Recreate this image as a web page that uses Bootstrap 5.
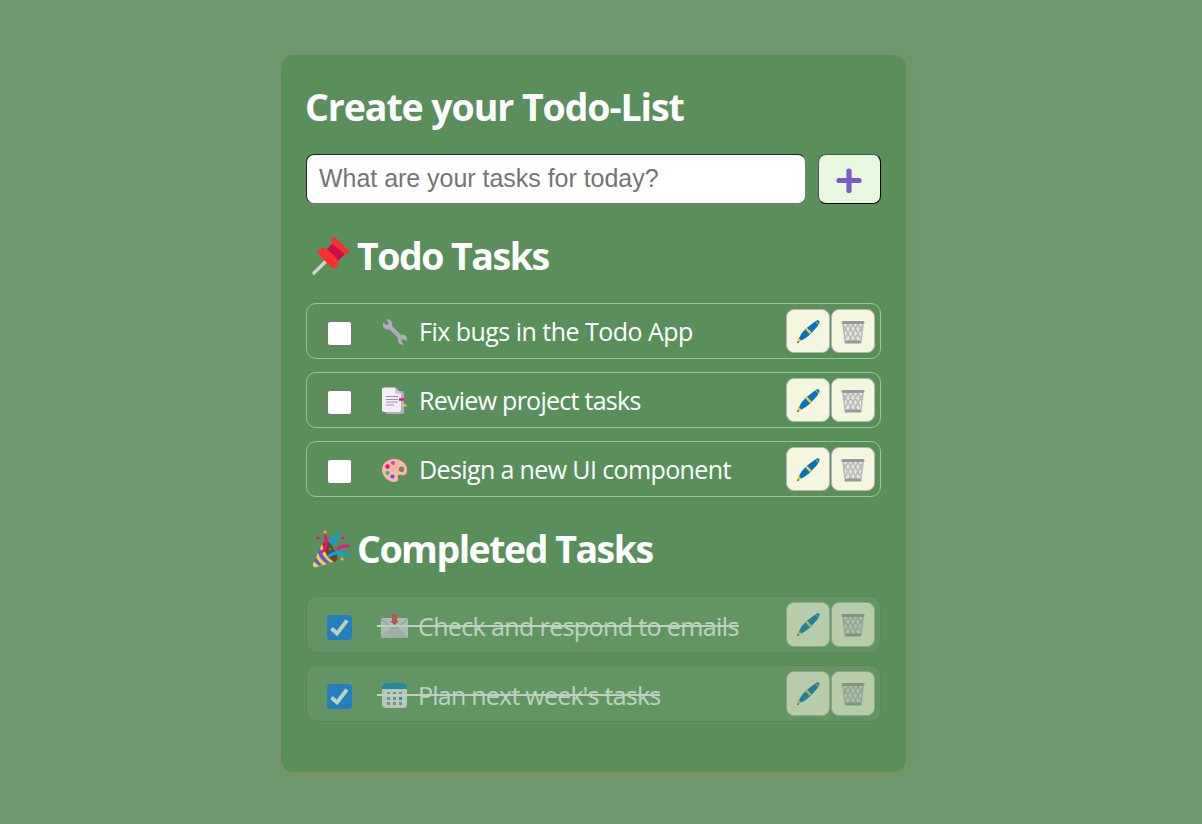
<!DOCTYPE html>
<html lang="en">
<head>
<meta charset="utf-8">
<meta name="viewport" content="width=device-width, initial-scale=1">
<title>Todo-List</title>
<link rel="stylesheet" href="https://cdn.jsdelivr.net/npm/bootstrap@5.3.0/dist/css/bootstrap.min.css">
<style>
body{background:#6e9770;font-family:"Segoe UI","Open Sans",sans-serif;color:#fff;height:824px;overflow:hidden}
.todo-panel{width:625px;height:717px;margin:55px 0 0 281px;padding:27px 25px 25px;border-radius:12.5px;background:#5a8f5c;box-shadow:0 3px 8px rgba(139,145,80,.65)}
.heading{font-size:37.5px;font-weight:700;line-height:50px;letter-spacing:-1.5px;margin:0;white-space:nowrap}
.main-title{letter-spacing:-1.08px;margin-left:-1px}
.heading svg{width:39px;height:40px;flex:none;margin-right:6px;margin-top:2px}
.entry-form{margin-top:22px}
.section-title{margin-top:27px;padding-left:6px}
.task-input{width:500px;height:50px;border:1px solid;border-color:#222 #767676 #767676 #222;border-radius:8px;padding:0 12px 2px;font:25px "Liberation Sans",sans-serif;letter-spacing:-.03px;background:#fff}
.task-input::placeholder{color:#757575;opacity:1}
.add-btn{width:63px;height:50px;border:1px solid;border-color:#555 #000 #000 #555;border-radius:8px;background:#e6f8dd;padding:0 2px 0 0}
.add-btn svg{margin-top:3px}
.task-stack{gap:13px;margin-top:22px}
.done-stack{gap:12px}
.task-row{height:56px;border:1px solid #8fca96;border-radius:10px;padding:0 5px 0 20px}
.task-check{appearance:none;width:25px;height:25px;margin:5px 0 0;border:1px solid #767676;border-radius:3px;background:#fff}
.task-check:checked{border-color:#0075ff;background:#0075ff url("data:image/svg+xml,%3Csvg xmlns='http://www.w3.org/2000/svg' viewBox='0 0 23 23'%3E%3Cpath d='M3.500 12.500l5.500 5L19 4.500' fill='none' stroke='white' stroke-width='3.800'/%3E%3C/svg%3E")}
.task-label{font-size:25px;line-height:34px;letter-spacing:-.62px;margin-left:25px;white-space:nowrap}
.task-label svg{width:28px;height:28px;margin:2px 10px 0 3px;flex:none}
.tools{gap:1px}
.tool-btn{width:44px;height:44px;border:1px solid #b5b5b5;border-radius:8px;background:#f5f6df;padding:0;margin-bottom:1px}
.tool-btn svg{width:26px;height:26px;margin-top:2px}
.tight-a{letter-spacing:-.52px}
.tight-b{letter-spacing:-.73px}
.tight-e{letter-spacing:-.76px}
.done{height:57px;opacity:.6;background:#69996a;border-color:#756f73}
.done .tool-btn{height:45px}
.done .task-label{position:relative;margin-left:25px;margin-top:3px;padding-left:1px}
.done .task-label svg{margin-right:9px}
.done .task-label::after{content:"";position:absolute;left:0;right:0;top:16px;height:2px;background:#fff}
</style>
</head>
<body>
<svg class="d-none">
 <symbol id="pen" viewBox="0 0 26 26"><path d="M2 24l2-6 3 3z" fill="#f7b928"/><path d="M1.8 24.300l1-2.600 1.600 1.500z" fill="#6b5a3c"/><path d="M4 19Q6 14 11 9.500L20 2.500Q23 .5 24.500 2 25 5 22 8L14.500 16Q10 20 6.500 21.500z" fill="#0074bd"/><path d="M10.300 10.200l1.700-1.500 4.500 4.600-1.600 1.900z" fill="#ffc83d"/><path d="M20.500 2.200l3.300 3.600" stroke="#ffc83d" stroke-width="1"/></symbol>
 <symbol id="bin" viewBox="0 0 26 26"><path d="M3 5h20l-2 17H5z" fill="#e4e4dd"/><g fill="none" stroke="#b8b8b6" stroke-width="1.500"><path d="M3 5l2 17M23 5l-2 17M4 7l8 15M8 5l9 17M13 5l7 14M18 5l4 8M22 7l-8 15M18 5L9 22M13 5L5 20M8 5l-4 8"/></g><path d="M3 3.500h20" stroke="#999" stroke-width="3" stroke-linecap="round"/><path d="M6 23h14" stroke="#999" stroke-width="3" stroke-linecap="round"/></symbol>
</svg>
<main class="todo-panel">
 <h1 class="heading main-title">Create your Todo-List</h1>
 <form class="entry-form d-flex justify-content-between" onsubmit="return false">
  <input class="task-input" placeholder="What are your tasks for today?">
  <button class="add-btn d-flex align-items-center justify-content-center" aria-label="Add"><svg width="26" height="26" viewBox="0 0 26 26"><path d="M13 3v19.500M3 12.500h20" stroke="#7b5cc8" stroke-width="5.200" stroke-linecap="round"/></svg></button>
 </form>
 <h2 class="heading section-title d-flex align-items-center">
  <svg viewBox="0 0 39 40"><path d="M2 36L15 23" stroke="#d3d3d3" stroke-width="3.200" stroke-linecap="round"/><path d="M13 14l10-10 11 12-9 9z" fill="#ca0b4a"/><path d="M20 1.500Q22-1 24 1L36.500 13.500Q38 16 36 16.500 33 18 30 15L20.500 7Q18 4 20 1.500zM6.500 13Q11 9 16 13L25 21.500Q27 26 25 30 22 32.500 19 30L6.500 17.500Q4 15 6.500 13z" fill="#f92f30"/></svg><span>Todo Tasks</span></h2>
 <section class="task-stack d-flex flex-column">
  <div class="task-row d-flex align-items-center"><input class="task-check" type="checkbox"><div class="task-label ps-1 d-flex align-items-center flex-grow-1"><svg class="ms-0" viewBox="0 0 28 28"><path d="M7 7L21 21" stroke="#b4acbc" stroke-width="4.200"/><path d="M2 4.500l4 2.700 2-2-3-4Q10 1 11 5 12 10 8 11.500 1 12 2 4.500zM26 23.500l-4-2.700-2 2 3 4Q18 27 17 23 16 18 20 16.500 27 16 26 23.500z" fill="#b4acbc"/></svg><span class="tight-a">Fix bugs in the Todo App</span></div><div class="tools d-flex"><button class="tool-btn"><svg><use href="#pen"/></svg></button><button class="tool-btn"><svg><use href="#bin"/></svg></button></div></div>
  <div class="task-row d-flex align-items-center"><input class="task-check" type="checkbox"><div class="task-label ps-1 d-flex align-items-center flex-grow-1"><svg class="ms-0" viewBox="0 0 28 28"><rect x="5" y="4" width="18" height="23" rx="1.500" fill="#b4acbc"/><path d="M3 .5h11l6 6V23q0 2-2 2H3q-2 0-2-2V2.500q0-2 2-2z" fill="#f3eef8"/><path d="M14 .5l6 6.500h-4q-2 0-2-2z" fill="#cdc4d6"/><path d="M5 9.500h12M5 12.500h12M5 15h12M5 18h8" stroke="#9b94a6"/><path d="M18 12.500h5" stroke="#f70a8d" stroke-width="2.500"/><path d="M21 18.500h4.500" stroke="#f9c23c" stroke-width="2.200"/></svg><span class="tight-b">Review project tasks</span></div><div class="tools d-flex"><button class="tool-btn"><svg><use href="#pen"/></svg></button><button class="tool-btn"><svg><use href="#bin"/></svg></button></div></div>
  <div class="task-row d-flex align-items-center"><input class="task-check" type="checkbox"><div class="task-label ps-1 d-flex align-items-center flex-grow-1"><svg class="ms-0" viewBox="0 0 28 28"><path fill-rule="evenodd" d="M13 3C6 3 1 8 1 14c0 6 6 12 12 12 3 0 4-1 4-3-1-4 0-5 4-4 4 1 5-2 5-5 0-7-6-11-13-11zM20.500 10.500a2.700 2.700 0 1 1 0 5.400 2.700 2.700 0 0 1 0-5.400z" fill="#ffb4a5"/><circle cx="12" cy="7" r="2" fill="#8d65c5"/><circle cx="6.500" cy="10.500" r="2.200" fill="#f70a8d"/><circle cx="6.500" cy="17" r="2" fill="#00d26a"/><circle cx="11.500" cy="20.500" r="2.100" fill="#3f5fff"/></svg><span>Design a new UI component</span></div><div class="tools d-flex"><button class="tool-btn"><svg><use href="#pen"/></svg></button><button class="tool-btn"><svg><use href="#bin"/></svg></button></div></div>
 </section>
 <h2 class="heading section-title d-flex align-items-center">
  <svg viewBox="0 0 39 40"><path d="M10 14Q14 9 18 13L25 24Q27 32 20 33L14 28z" fill="#6d4534"/><path d="M10 14L1 34Q0 38 5 37L22 32Q14 28 10 14z" fill="#ffc83d"/><path d="M8 18Q10 27 19 33l-4 1Q7 29 6 22zM4 27q3 6 7 8l-4 1q-4-3-5-5z" fill="#4b5fe8"/><g fill="none" stroke-width="2.800" stroke-linecap="round"><path d="M10 22Q15 19 14 8l-1-2M26 19q4-4 10-3" stroke="#f70a8d"/><path d="M17 26q8-6 19-1" stroke="#00a6ed"/><path d="M23 13q-6-1-3-5 5-1 4 3-2 4-4 1M22 12q3-4 4-9" stroke="#00a6ed" stroke-width="2"/></g><g fill="#f70a8d"><circle cx="6" cy="8" r="1.600"/><circle cx="31" cy="8" r="1.600"/></g><g fill="#ffb02e"><circle cx="13" cy="2" r="1.500"/><circle cx="30" cy="29" r="1.500"/></g><circle cx="18" cy="19" r="1.300" fill="#00a6ed"/></svg><span>Completed Tasks</span></h2>
 <section class="task-stack done-stack d-flex flex-column">
  <div class="task-row done d-flex align-items-center"><input class="task-check" type="checkbox" checked><div class="d-flex flex-grow-1"><div class="task-label d-flex align-items-center"><svg viewBox="0 0 28 28"><rect y="5" width="27" height="20" rx="1" fill="#e1d8ec"/><path d="M0 24L10 14h7l10 10v1H0z" fill="#cdc4d6"/><path d="M0 6l10 8q3.500 3 7 0l10-8" fill="none" stroke="#b4acbc" stroke-width="1.200"/><path d="M11 1h5v7h2l-4.500 4L9 8h2z" fill="#f92f50"/></svg><span>Check and respond to emails</span></div></div><div class="tools d-flex"><button class="tool-btn"><svg><use href="#pen"/></svg></button><button class="tool-btn"><svg><use href="#bin"/></svg></button></div></div>
  <div class="task-row done d-flex align-items-center"><input class="task-check" type="checkbox" checked><div class="d-flex flex-grow-1"><div class="task-label d-flex align-items-center"><svg viewBox="0 0 28 28"><rect x="1" y="1" width="25" height="25" rx="4" fill="#f3eef8"/><path d="M1 7V5q0-4 4-4h17q4 0 4 4v2z" fill="#0084ce"/><path d="M12 11.500h3M18 11.500h3M6 11.500h3M6 16.500h3M12 16.500h3M6 21.500h3M12 21.500h3M18 21.500h3" stroke="#998ea4" stroke-width="2.800"/><path d="M18 16.500h3" stroke="#0084ce" stroke-width="2.800"/></svg><span class="tight-e">Plan next week's tasks</span></div></div><div class="tools d-flex"><button class="tool-btn"><svg><use href="#pen"/></svg></button><button class="tool-btn"><svg><use href="#bin"/></svg></button></div></div>
 </section>
</main>
<script src="https://cdn.jsdelivr.net/npm/bootstrap@5.3.0/dist/js/bootstrap.bundle.min.js"></script>
</body>
</html>
